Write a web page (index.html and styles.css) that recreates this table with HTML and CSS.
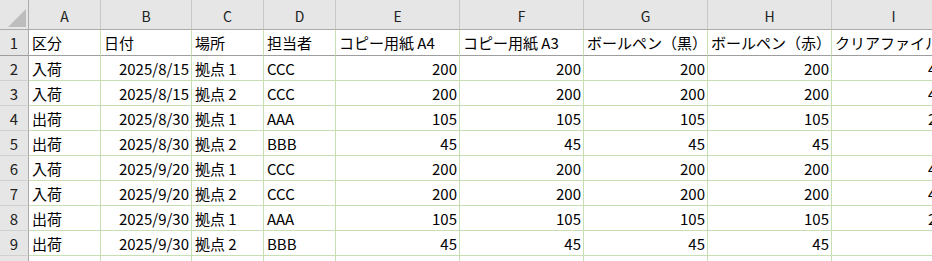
FILE: index.html
```html
<!DOCTYPE html>
<html lang="ja">
<head>
<meta charset="utf-8">
<title>Sheet</title>
<link rel="stylesheet" href="styles.css">
</head>
<body>
<div class="sheet">
  <div class="grid">
    <div class="corner"><span class="tri"></span></div>
    <div class="ch">A</div><div class="ch">B</div><div class="ch">C</div><div class="ch">D</div><div class="ch">E</div><div class="ch">F</div><div class="ch">G</div><div class="ch">H</div><div class="ch">I</div>

    <div class="rh r1">1</div>
    <div class="c r1">区分</div><div class="c r1">日付</div><div class="c r1">場所</div><div class="c r1">担当者</div><div class="c r1">コピー用紙 A4</div><div class="c r1">コピー用紙 A3</div><div class="c r1">ボールペン（黒）</div><div class="c r1">ボールペン（赤）</div><div class="c r1">クリアファイル</div>

    <div class="rh">2</div>
    <div class="c">入荷</div><div class="c n">2025/8/15</div><div class="c">拠点 1</div><div class="c">CCC</div><div class="c n">200</div><div class="c n">200</div><div class="c n">200</div><div class="c n">200</div><div class="c n">400</div>

    <div class="rh">3</div>
    <div class="c">入荷</div><div class="c n">2025/8/15</div><div class="c">拠点 2</div><div class="c">CCC</div><div class="c n">200</div><div class="c n">200</div><div class="c n">200</div><div class="c n">200</div><div class="c n">400</div>

    <div class="rh">4</div>
    <div class="c">出荷</div><div class="c n">2025/8/30</div><div class="c">拠点 1</div><div class="c">AAA</div><div class="c n">105</div><div class="c n">105</div><div class="c n">105</div><div class="c n">105</div><div class="c n">210</div>

    <div class="rh">5</div>
    <div class="c">出荷</div><div class="c n">2025/8/30</div><div class="c">拠点 2</div><div class="c">BBB</div><div class="c n">45</div><div class="c n">45</div><div class="c n">45</div><div class="c n">45</div><div class="c n">90</div>

    <div class="rh">6</div>
    <div class="c">入荷</div><div class="c n">2025/9/20</div><div class="c">拠点 1</div><div class="c">CCC</div><div class="c n">200</div><div class="c n">200</div><div class="c n">200</div><div class="c n">200</div><div class="c n">400</div>

    <div class="rh">7</div>
    <div class="c">入荷</div><div class="c n">2025/9/20</div><div class="c">拠点 2</div><div class="c">CCC</div><div class="c n">200</div><div class="c n">200</div><div class="c n">200</div><div class="c n">200</div><div class="c n">400</div>

    <div class="rh">8</div>
    <div class="c">出荷</div><div class="c n">2025/9/30</div><div class="c">拠点 1</div><div class="c">AAA</div><div class="c n">105</div><div class="c n">105</div><div class="c n">105</div><div class="c n">105</div><div class="c n">210</div>

    <div class="rh">9</div>
    <div class="c">出荷</div><div class="c n">2025/9/30</div><div class="c">拠点 2</div><div class="c">BBB</div><div class="c n">45</div><div class="c n">45</div><div class="c n">45</div><div class="c n">45</div><div class="c n">90</div>

    <div class="rh">10</div>
    <div class="c"></div><div class="c"></div><div class="c"></div><div class="c"></div><div class="c"></div><div class="c"></div><div class="c"></div><div class="c"></div><div class="c"></div>
  </div>
</div>
</body>
</html>
```
FILE: styles.css
```css
html, body {
  margin: 0;
  padding: 0;
  background: #ffffff;
}
.sheet {
  width: 932px;
  height: 261px;
  overflow: hidden;
}
.grid {
  display: grid;
  grid-template-columns: 29px 72px 91px 72px 72px 124px 124px 124px 124px 124px;
  grid-template-rows: 30px 26px 25px 25px 25px 25px 25px 25px 25px 25px 25px;
  width: 957px;
  font-family: "Noto Sans CJK JP", "Noto Sans", sans-serif;
  font-size: 15px;
  color: #000;
}
.grid > div {
  box-sizing: border-box;
  white-space: nowrap;
  overflow: hidden;
}
.corner {
  background: #e6e6e6;
  border-right: 1px solid #ababab;
  border-bottom: 1px solid #ababab;
  position: relative;
}
.tri {
  position: absolute;
  left: 8px;
  top: 9px;
  width: 0;
  height: 0;
  border-style: solid;
  border-width: 0 0 18px 18px;
  border-color: transparent transparent #bdbdbd transparent;
}
.ch {
  background: #e6e6e6;
  border-right: 1px solid #c8c8c8;
  border-bottom: 1px solid #ababab;
  display: flex;
  align-items: flex-end;
  justify-content: center;
  padding-bottom: 3px;
  font-size: 14px;
  color: #222;
  line-height: 20px;
}
.rh {
  background: #e6e6e6;
  border-right: 1px solid #ababab;
  border-bottom: 1px solid #d0d0d0;
  display: flex;
  align-items: center;
  justify-content: center;
  font-size: 15px;
  color: #222;
  line-height: 20px;
  padding-top: 1px;
}
.c {
  border-right: 1px solid #c6e0b4;
  border-bottom: 1px solid #c6e0b4;
  display: flex;
  align-items: center;
  padding: 1px 3px 0 3px;
  line-height: 20px;
}
.rh.r1, .c.r1 {
  border-bottom: 1px solid #9e9e9e;
}
.n {
  justify-content: flex-end;
  padding-right: 2px;
}
```
